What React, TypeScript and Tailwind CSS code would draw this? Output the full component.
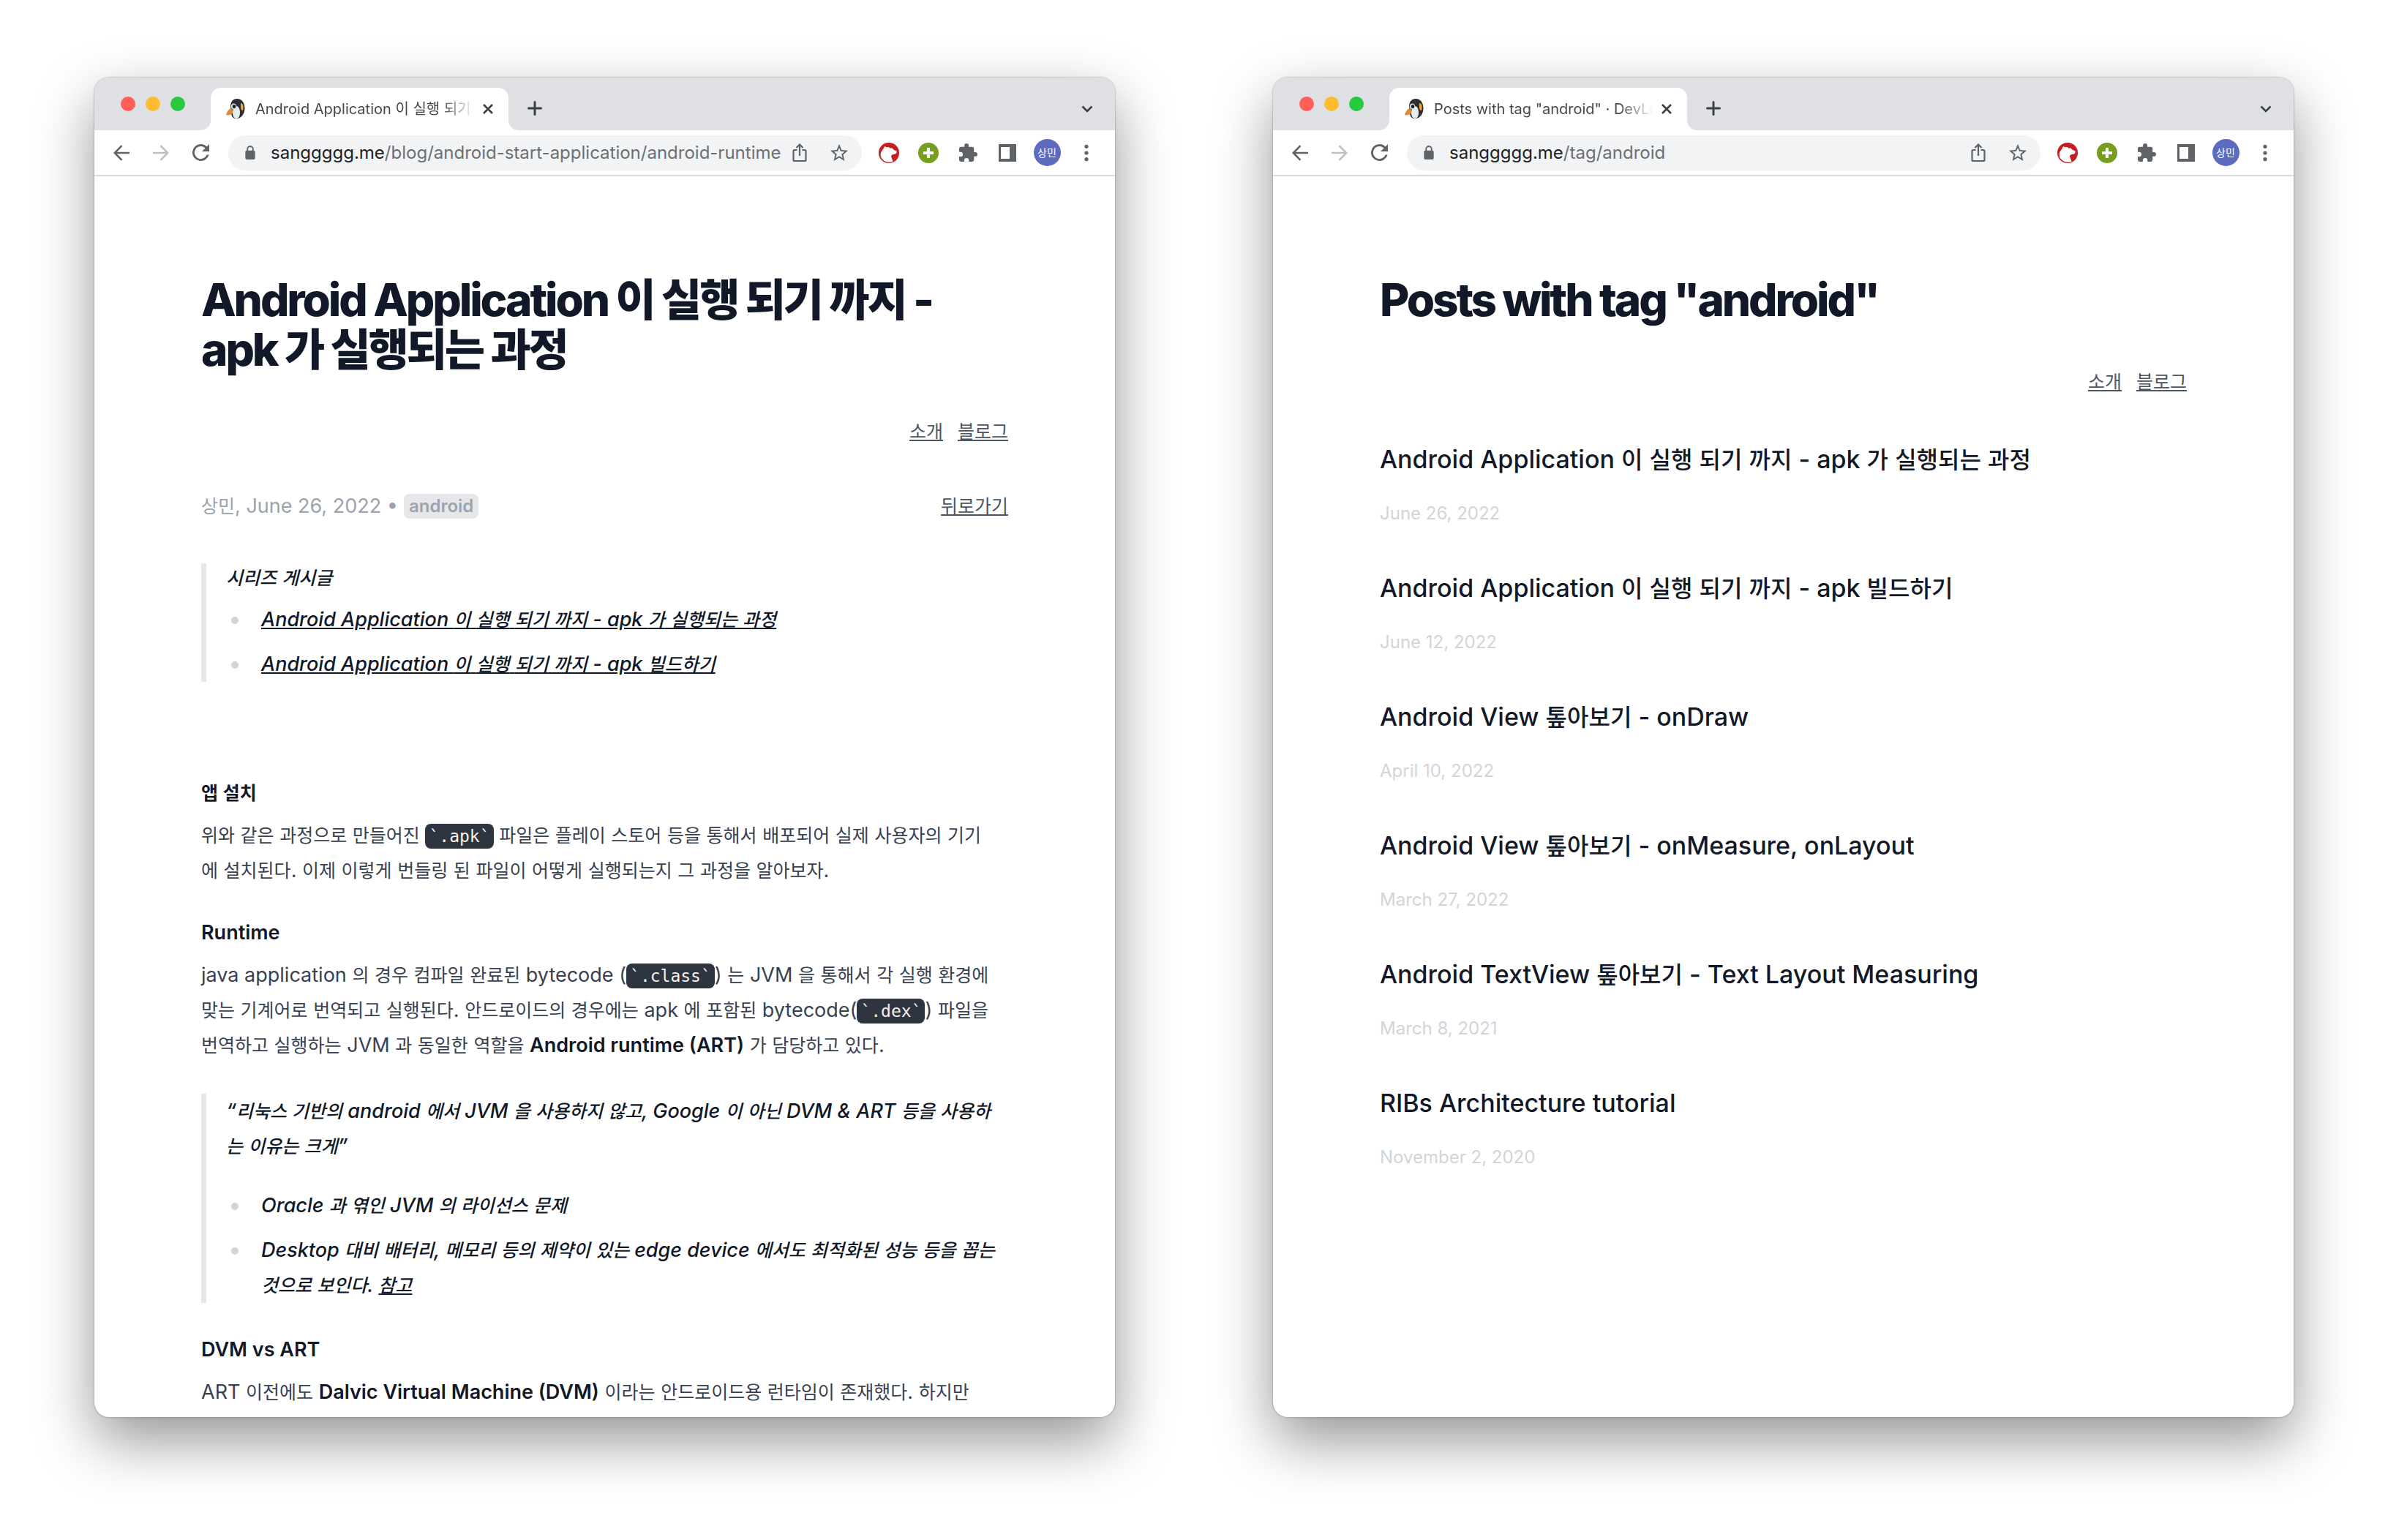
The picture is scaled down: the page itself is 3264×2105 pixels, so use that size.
import React from "react";

type Size = "body" | "title" | "post" | "tab" | "avatar";

const koSize: Record<Size, string> = {
  body: "text-[25px] leading-none",
  title: "text-[60px] leading-none",
  post: "text-[32px] leading-none",
  tab: "text-[20px] leading-none",
  avatar: "text-[14px] leading-none",
};

/* Sets Hangul runs slightly smaller so they sit optically level with the Latin face. */
function T({ children, size = "body" }: { children: string; size?: Size }) {
  return (
    <>
      {children.split(/([가-힣]+)/).map((part, i) =>
        i % 2 === 1 ? (
          <span key={i} className={koSize[size]}>
            {part}
          </span>
        ) : (
          part
        ),
      )}
    </>
  );
}

function Penguin() {
  return (
    <svg viewBox="0 0 26 28" className="h-7 w-[26px] shrink-0" aria-hidden="true">
      <path d="M15 0C22 0 25.500 6 25.500 13c0 7-4 13-10 14-5 1-8-2-8.500-7L6 9C7 3 10 0 15 0Z" fill="#2b2f33" />
      <path d="M20 6c4 0 4 6 3 10-2 0-3-2-3-4Z" fill="#f5a623" />
      <path d="M14 10c3 0 5 4 5 9 0 5-2 8-5 8s-5-3-5-8c0-4 2-9 5-9Z" fill="#e9ecee" />
      <ellipse cx="10.500" cy="10.500" rx="3.600" ry="4" fill="#d5d9dc" />
      <ellipse cx="11" cy="10.500" rx="2.200" ry="2.600" fill="#17191c" />
      <path d="M6 13c3 1 4 3 3 6-1 3-6 4-9 3 1-4 3-7 6-9Z" fill="#e08a3c" />
    </svg>
  );
}

function TabCurve({ flip }: { flip?: boolean }) {
  return (
    <svg viewBox="0 0 14 14" className={flip ? "h-[14px] w-[14px] -scale-x-100" : "h-[14px] w-[14px]"} aria-hidden="true">
      <path d="M14 0v14H0C8 14 14 8 14 0Z" fill="#fff" />
    </svg>
  );
}

const iconBtn = "flex size-[54px] shrink-0 items-center justify-center";

function Chrome({ tab, host, path }: { tab: string; host: string; path: string }) {
  return (
    <header>
      <div className="flex h-[72px] items-end bg-[#dee0e4] pl-9">
        <div className="flex h-[72px] items-center gap-[14px]">
          <button aria-label="Close window" className="size-5 rounded-full bg-[#ff5f57]" />
          <button aria-label="Minimize window" className="size-5 rounded-full bg-[#febc2e]" />
          <button aria-label="Zoom window" className="size-5 rounded-full bg-[#28c840]" />
        </div>
        <div className="ml-[21px] flex items-end">
          <TabCurve />
          <div className="flex h-[58px] w-[407px] items-center rounded-t-[14px] bg-white pl-[21px] pr-[10px]">
            <Penguin />
            <div className="ml-[14px] flex-1 overflow-hidden whitespace-nowrap text-[20px] leading-7 text-[#45494d] [mask-image:linear-gradient(to_right,#000_85%,transparent)]">
              <T size="tab">{tab}</T>
            </div>
            <button aria-label="Close tab" className="flex size-9 shrink-0 items-center justify-center">
              <svg viewBox="0 0 14 14" className="size-[14px]" stroke="#3c4043" strokeWidth="2.6" aria-hidden="true">
                <path d="M1 1l12 12M13 1L1 13" />
              </svg>
            </button>
          </div>
          <TabCurve flip />
        </div>
        <button aria-label="New tab" className="mb-[10px] ml-[2px] flex size-10 items-center justify-center">
          <svg viewBox="0 0 20 20" className="size-5" stroke="#3c4043" strokeWidth="3" strokeLinecap="round" aria-hidden="true">
            <path d="M10 1.500v17M1.500 10h17" />
          </svg>
        </button>
        <button aria-label="Search tabs" className="mb-[9px] ml-auto mr-[18px] flex size-10 items-center justify-center">
          <svg viewBox="0 0 16 10" className="h-[10px] w-4" fill="none" stroke="#3c4043" strokeWidth="2.6" aria-hidden="true">
            <path d="M1.500 1.500L8 8l6.500-6.500" />
          </svg>
        </button>
      </div>
      <div className="flex h-[63px] items-center border-b-2 border-[#dadce0] bg-white pl-[10px] pr-3">
        <button aria-label="Back" className={iconBtn}>
          <svg viewBox="0 0 22 22" className="size-[22px]" fill="none" stroke="#5f6368" strokeWidth="2.600" aria-hidden="true">
            <path d="M22 11H2M11.500 1.200L1.800 11l9.700 9.800" />
          </svg>
        </button>
        <button aria-label="Forward" className={iconBtn}>
          <svg viewBox="0 0 22 22" className="size-[22px]" fill="none" stroke="#bdc1c6" strokeWidth="2.600" aria-hidden="true">
            <path d="M0 11h20M10.500 1.200l9.700 9.800-9.700 9.800" />
          </svg>
        </button>
        <button aria-label="Reload" className={iconBtn}>
          <svg viewBox="4 4 16 16" className="size-[23px]" fill="#5f6368" aria-hidden="true">
            <path d="M17.650 6.350A7.960 7.960 0 0 0 12 4a8 8 0 1 0 7.730 10h-2.080A6 6 0 1 1 12 6c1.660 0 3.140.69 4.220 1.780L13 11h7V4z" />
          </svg>
        </button>
        <div className="ml-[11px] mr-[10px] flex h-12 min-w-0 flex-1 items-center rounded-full bg-[#f1f3f4] pl-[22px] pr-1">
          <svg viewBox="0 0 16 20" className="h-[19px] w-4 shrink-0" aria-hidden="true">
            <path d="M4 8V5a4 4 0 0 1 8 0v3" fill="none" stroke="#5f6368" strokeWidth="2" />
            <rect x="1" y="7" width="14" height="13" rx="2" fill="#5f6368" />
          </svg>
          <a href="#" className="ml-5 min-w-0 flex-1 whitespace-nowrap text-[24px] leading-8 text-[#6b7075]">
            <span className="text-[#202124]">{host}</span>
            {path}
          </a>
          <button aria-label="Share" className={iconBtn}>
            <svg viewBox="0 0 20 26" className="h-[26px] w-5" fill="none" stroke="#5f6368" strokeWidth="2.200" aria-hidden="true">
              <path d="M6.500 9H3a1.500 1.500 0 0 0-1.500 1.500v12A1.500 1.500 0 0 0 3 24h14a1.500 1.500 0 0 0 1.500-1.500v-12A1.500 1.500 0 0 0 17 9h-3.500M10 17V2M5.500 6L10 1.500 14.500 6" />
            </svg>
          </button>
          <button aria-label="Bookmark" className={iconBtn}>
            <svg viewBox="2 2 20 19" className="h-[23px] w-6" fill="#5f6368" aria-hidden="true">
              <path d="M22 9.240l-7.190-.62L12 2 9.190 8.630 2 9.240l5.460 4.730L5.820 21 12 17.270 18.180 21l-1.630-7.030L22 9.240zM12 15.400l-3.760 2.270 1-4.280-3.320-2.880 4.380-.38L12 6.100l1.710 4.040 4.380.38-3.320 2.880 1 4.280L12 15.400z" />
            </svg>
          </button>
        </div>
        <button aria-label="Kitty extension" className={iconBtn}>
          <svg viewBox="0 0 28 28" className="size-7" aria-hidden="true">
            <circle cx="14" cy="14" r="14" fill="#c41e23" />
            <path
              d="M8.300 5l2.200 1.300 3-.3 2 1.500h3l2.500 2.500 3.500 1.500c.5 2-.5 3.500-2 4l-3.500.8c-1.500.5-2.200 1.500-1.800 3l2.300 6.500c-4.500 2-10 1-13.500-2.300C3 21 2 17 3 13.500 4 11.500 6 9.500 6.500 8Z"
              fill="#fff"
            />
          </svg>
        </button>
        <button aria-label="Add extension" className={iconBtn}>
          <svg viewBox="0 0 28 28" className="size-7" aria-hidden="true">
            <circle cx="14" cy="14" r="14" fill="#769f22" />
            <path d="M14 7v14M7 14h14" stroke="#fff" strokeWidth="4" />
          </svg>
        </button>
        <button aria-label="Extensions" className={iconBtn}>
          <svg viewBox="2 1 21 21" className="size-[25px]" fill="#5f6368" aria-hidden="true">
            <path d="M20.500 11H19V7a2 2 0 0 0-2-2h-4V3.500a2.500 2.500 0 0 0-5 0V5H4a2 2 0 0 0-1.990 2v3.800H3.500a2.700 2.700 0 0 1 0 5.400H2V20a2 2 0 0 0 2 2h3.800v-1.500a2.700 2.700 0 0 1 5.400 0V22H17a2 2 0 0 0 2-2v-4h1.500a2.500 2.500 0 0 0 0-5z" />
          </svg>
        </button>
        <button aria-label="Side panel" className={iconBtn}>
          <svg viewBox="0 0 24 24" className="size-6" aria-hidden="true">
            <path d="M0 0h24v24H0zM3 4v16h12V4z" fill="#5f6368" fillRule="evenodd" />
          </svg>
        </button>
        <button aria-label="Profile" className={iconBtn}>
          <span className="flex size-[37px] items-center justify-center rounded-full bg-[#5c6bc0] leading-4 text-white">
            <T size="avatar">상민</T>
          </span>
        </button>
        <button aria-label="Menu" className={iconBtn}>
          <svg viewBox="0 0 6 24" className="h-6 w-[6px]" fill="#5f6368" aria-hidden="true">
            <circle cx="3" cy="3.300" r="2.600" />
            <circle cx="3" cy="12" r="2.600" />
            <circle cx="3" cy="20.700" r="2.600" />
          </svg>
        </button>
      </div>
    </header>
  );
}

function Browser({ tab, host, path, children }: { tab: string; host: string; path: string; children: React.ReactNode }) {
  return (
    <section className="flex h-[1831px] min-w-0 flex-1 flex-col overflow-hidden rounded-[20px] bg-white shadow-[0_0_2px_rgba(0,0,0,0.5),0_32px_80px_rgba(0,0,0,0.42)]">
      <Chrome tab={tab} host={host} path={path} />
      <div className="min-h-0 flex-1 overflow-hidden px-[146px] pt-[135px] text-[27px] leading-[48px] text-[#374151]">{children}</div>
    </section>
  );
}

function PageTop({ title }: { title: string }) {
  return (
    <>
      <h1 className="text-[62px] font-extrabold leading-[68px] tracking-tighter text-[#111827]">
        <T size="title">{title}</T>
      </h1>
      <nav className="mt-[54px] flex justify-end gap-5 text-[#4b5563]">
        <a href="#about" className="underline">
          <T>소개</T>
        </a>
        <a href="#blog" className="underline">
          <T>블로그</T>
        </a>
      </nav>
    </>
  );
}

function Code({ children }: { children: string }) {
  return (
    <code className="rounded-lg bg-[#2e3440] px-[5px] py-1 font-['DejaVu_Sans_Mono','Liberation_Mono',monospace] text-[23px] leading-none text-[#f5f3e7]">
      {children}
    </code>
  );
}

function Quote({ children }: { children: React.ReactNode }) {
  return (
    <blockquote className="border-l-[7px] border-[#e5e7eb] pl-[27px] font-medium italic text-[#111827]">{children}</blockquote>
  );
}

function Item({ children }: { children: React.ReactNode }) {
  return (
    <li className="flex gap-[31px] pl-[7px]">
      <span className="mt-5 size-[10px] shrink-0 rounded-full bg-[#d1d5db]" />
      <span>{children}</span>
    </li>
  );
}

function Article() {
  return (
    <article>
      <PageTop title="Android Application 이 실행 되기 까지 - apk 가 실행되는 과정" />
      <div className="mt-[54px] flex items-center justify-between text-[#9ca3af]">
        <p className="flex items-center">
          <span>
            <T>상민, June 26, 2022 •</T>
          </span>
          <a href="#android" className="ml-2 rounded-lg bg-[#e5e7eb] px-[7px] text-[24px] font-semibold leading-[34px]">
            android
          </a>
        </p>
        <a href="#back" className="text-[#4b5563] underline">
          <T>뒤로가기</T>
        </a>
      </div>
      <div className="mt-[54px]">
        <Quote>
          <p className="leading-10">
            <T>시리즈 게시글</T>
          </p>
          <ul className="mt-[13px] flex flex-col gap-[13px]">
            <Item>
              <a href="#run" className="underline">
                <T>Android Application 이 실행 되기 까지 - apk 가 실행되는 과정</T>
              </a>
            </Item>
            <Item>
              <a href="#build" className="underline">
                <T>Android Application 이 실행 되기 까지 - apk 빌드하기</T>
              </a>
            </Item>
          </ul>
        </Quote>
      </div>
      <h3 className="mt-[128px] font-semibold text-[#111827]">
        <T>앱 설치</T>
      </h3>
      <p className="mt-[10px]">
        <T>위와 같은 과정으로 만들어진 </T>
        <Code>`.apk`</Code>
        <T> 파일은 플레이 스토어 등을 통해서 배포되어 실제 사용자의 기기</T>
        <br />
        <T>에 설치된다. 이제 이렇게 번들링 된 파일이 어떻게 실행되는지 그 과정을 알아보자.</T>
      </p>
      <h3 className="mt-[37px] font-semibold text-[#111827]">Runtime</h3>
      <p className="mt-[10px]">
        <T>java application 의 경우 컴파일 완료된 bytecode (</T>
        <Code>`.class`</Code>
        <T>) 는 JVM 을 통해서 각 실행 환경에</T>
        <br />
        <T>맞는 기계어로 번역되고 실행된다. 안드로이드의 경우에는 apk 에 포함된 bytecode(</T>
        <Code>`.dex`</Code>
        <T>) 파일을</T>
        <br />
        <T>번역하고 실행하는 JVM 과 동일한 역할을 </T>
        <strong className="font-semibold text-[#111827]">Android runtime (ART)</strong>
        <T> 가 담당하고 있다.</T>
      </p>
      <div className="mt-[42px]">
        <Quote>
          <p>
            <T>“리눅스 기반의 android 에서 JVM 을 사용하지 않고, Google 이 아닌 DVM & ART 등을 사용하</T>
            <br />
            <T>는 이유는 크게”</T>
          </p>
          <ul className="mt-[33px] flex flex-col gap-[13px]">
            <Item>
              <T>Oracle 과 엮인 JVM 의 라이선스 문제</T>
            </Item>
            <Item>
              <T>Desktop 대비 배터리, 메모리 등의 제약이 있는 edge device 에서도 최적화된 성능 등을 꼽는</T>
              <br />
              <T>것으로 보인다. </T>
              <a href="#ref" className="underline">
                <T>참고</T>
              </a>
            </Item>
          </ul>
        </Quote>
      </div>
      <h3 className="mt-[40px] font-semibold text-[#111827]">DVM vs ART</h3>
      <p className="mt-[10px]">
        <T>ART 이전에도 </T>
        <strong className="font-semibold text-[#111827]">Dalvic Virtual Machine (DVM)</strong>
        <T> 이라는 안드로이드용 런타임이 존재했다. 하지만</T>
        <br />
        <T>DVM 의 JIT compiler 방식은 앱을 실행할 때마다 bytecode 를 번역해야 하기 때문에 성능이</T>
      </p>
    </article>
  );
}

const posts = [
  ["Android Application 이 실행 되기 까지 - apk 가 실행되는 과정", "June 26, 2022"],
  ["Android Application 이 실행 되기 까지 - apk 빌드하기", "June 12, 2022"],
  ["Android View 톺아보기 - onDraw", "April 10, 2022"],
  ["Android View 톺아보기 - onMeasure, onLayout", "March 27, 2022"],
  ["Android TextView 톺아보기 - Text Layout Measuring", "March 8, 2021"],
  ["RIBs Architecture tutorial", "November 2, 2020"],
];

export default function App() {
  return (
    <main className="flex gap-[216px] bg-white px-[129px] pb-[168px] pt-[106px] font-['Inter','Noto_Sans_CJK_KR',sans-serif]">
      <Browser
        tab="Android Application 이 실행 되기 까지 - apk 가 실행되는 과정"
        host="sanggggg.me"
        path="/blog/android-start-application/android-runtime"
      >
        <Article />
      </Browser>
      <Browser tab={'Posts with tag "android" · DevLog'} host="sanggggg.me" path="/tag/android">
        <PageTop title={'Posts with tag "android"'} />
        <ul className="mt-[58px] flex flex-col gap-[57px]">
          {posts.map(([title, date]) => (
            <li key={title}>
              <h2 className="text-[34px] font-medium text-[#111827]">
                <a href="#post">
                  <T size="post">{title}</T>
                </a>
              </h2>
              <p className="mt-[28px] text-[24px] leading-[43px] text-[#d1d5db]">{date}</p>
            </li>
          ))}
        </ul>
      </Browser>
    </main>
  );
}
